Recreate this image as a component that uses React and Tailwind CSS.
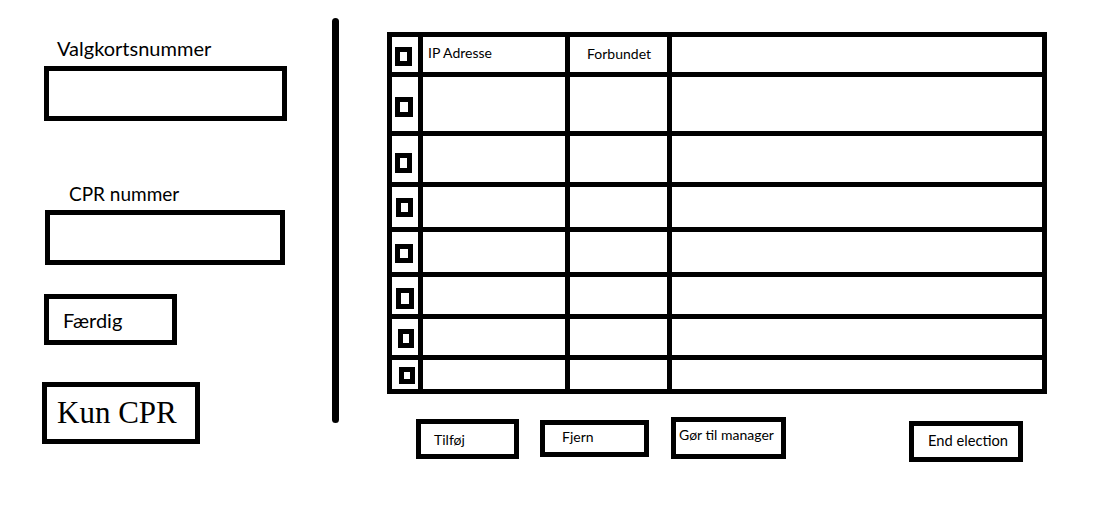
import React from "react";

const font = { fontFamily: "Lato, 'Open Sans', sans-serif" };

function Check({ className }) {
  return <div className={"border-[5px] border-black " + className} />;
}

const rows = [
  { h: "h-[40px]", cb: "ml-[3px] mt-[10px] w-[17px] h-[19px]" },
  { h: "h-[59px]", cb: "ml-[3px] mt-[20px] w-[18px] h-[20px]" },
  { h: "h-[51px]", cb: "ml-[3px] mt-[17px] w-[17px] h-[20px]" },
  { h: "h-[45px]", cb: "ml-[4px] mt-[11px] w-[17px] h-[19px]" },
  { h: "h-[45px]", cb: "ml-[3px] mt-[12px] w-[18px] h-[19px]" },
  { h: "h-[42px]", cb: "ml-[4px] mt-[11px] w-[18px] h-[21px]" },
  { h: "h-[41px]", cb: "ml-[6px] mt-[10px] w-[16px] h-[19px]" },
  { h: "h-[29px]", cb: "ml-[7px] mt-[7px] w-[16px] h-[17px]" },
];

export default function App() {
  return (
    <div className="flex w-[1103px] h-[519px] bg-white text-black" style={font}>
      {/* Left column */}
      <div className="w-[332px] flex flex-col pt-[36px]">
        <div className="ml-[57px] h-[24px] text-[20px] leading-[24px]">Valgkortsnummer</div>
        <div className="ml-[44px] mt-[6px] w-[243px] h-[55px] border-[5px] border-black" />
        <div className="ml-[69px] mt-[61px] h-[24px] text-[19px] leading-[24px]">CPR nummer</div>
        <div className="ml-[45px] mt-[4px] w-[240px] h-[55px] border-[5px] border-black" />
        <div className="ml-[44px] mt-[29px] w-[133px] h-[51px] border-[5px] border-black flex items-center pl-[14px] pt-[1px] text-[20px]">
          Færdig
        </div>
        <div
          className="ml-[42px] mt-[37px] w-[158px] h-[62px] border-[5px] border-black flex items-center pl-[10px] text-[31px]"
          style={{ fontFamily: "'Liberation Serif', serif" }}
        >
          Kun CPR
        </div>
      </div>

      {/* Divider */}
      <div className="mt-[18px] w-[7px] h-[405px] rounded-full bg-black" />

      {/* Right side */}
      <div className="ml-[48px] mt-[32px] flex flex-col">
        <div className="w-[660px] border-[5px] border-black flex flex-col">
          {rows.map((r, i) => (
            <div
              key={i}
              className={"flex " + r.h + (i < rows.length - 1 ? " border-b-[5px] border-black" : "")}
            >
              <div className="w-[31px] border-r-[5px] border-black">
                <Check className={r.cb} />
              </div>
              <div className="w-[147px] border-r-[5px] border-black pl-[5px] pt-[8px] text-[14px] leading-[16px]">
                {i === 0 ? "IP Adresse" : ""}
              </div>
              <div className="w-[102px] border-r-[5px] border-black pl-[17px] pt-[9px] text-[14px] leading-[16px]">
                {i === 0 ? "Forbundet" : ""}
              </div>
              <div className="flex-1" />
            </div>
          ))}
        </div>

        <div className="flex items-start text-[14px] leading-[16px]">
          <div className="ml-[29px] mt-[25px] w-[103px] h-[40px] border-[5px] border-black pl-[13px] pt-[8px]">Tilføj</div>
          <div className="ml-[21px] mt-[26px] w-[109px] h-[37px] border-[5px] border-black pl-[17px] pt-[4px]">Fjern</div>
          <div className="ml-[22px] mt-[23px] w-[115px] h-[42px] border-[5px] border-black pl-[3px] pt-[5px] whitespace-nowrap">Gør til manager</div>
          <div className="ml-[123px] mt-[27px] w-[114px] h-[41px] border-[5px] border-black pl-[14px] pt-[6px] whitespace-nowrap text-[14.7px]">End election</div>
        </div>
      </div>
    </div>
  );
}
